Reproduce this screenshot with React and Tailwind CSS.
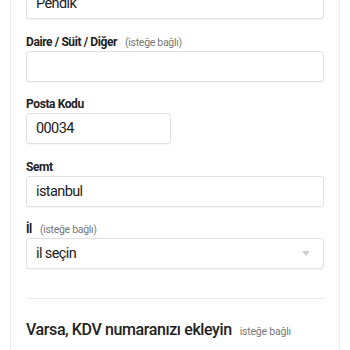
import React from 'react';

const font = { fontFamily: 'Roboto, "Noto Sans", sans-serif' };

function Label({ children, optional }) {
  return (
    <div className="flex items-baseline gap-[8px] h-4 leading-4 mb-px whitespace-nowrap">
      <span className="text-[12px] font-bold text-[#222] tracking-[-0.4px]">{children}</span>
      {optional && <span className="text-[10.5px] text-[#777] tracking-[-0.3px]">(isteğe bağlı)</span>}
    </div>
  );
}

function Field({ value, className = 'w-full' }) {
  return (
    <div className={`${className} h-[31px] border border-[#e2e2e2] rounded-[3px] bg-white flex items-center pl-[9px] text-[14.5px] tracking-[-0.6px] text-[#222] shadow-[0_1px_1px_rgba(0,0,0,0.04)]`}>
      {value}
    </div>
  );
}

export default function App() {
  return (
    <div className="w-[350px] h-[350px] overflow-hidden bg-white" style={font}>
      <div className="mx-[10px] border-x border-[#ececec] bg-white px-[15px] h-[400px]">
        <div className="-mt-[12px] flex flex-col">
          <Field value="Pendik" />

          <div className="mt-[15px]">
            <Label optional>Daire / Süit / Diğer</Label>
            <Field value="" />
          </div>

          <div className="mt-[14px]">
            <Label>Posta Kodu</Label>
            <Field value="00034" className="w-[145px]" />
          </div>

          <div className="mt-[15px]">
            <Label>Semt</Label>
            <Field value="istanbul" />
          </div>

          <div className="mt-[14px]">
            <Label optional>İl</Label>
            <div className="relative">
              <Field value="il seçin" />
              <svg className="absolute right-[14px] top-[13px]" width="8" height="5" viewBox="0 0 8 5">
                <path d="M0 0 L8 0 L4 5 Z" fill="#cfcfcf" />
              </svg>
            </div>
          </div>

          <div className="mt-[29px] mr-[-2px] border-t border-[#ebebeb]" />

          <div className="mt-[19px] flex items-baseline gap-[8px] whitespace-nowrap">
            <span className="text-[16px] font-medium text-[#222] tracking-[-0.4px]">Varsa, KDV numaranızı ekleyin</span>
            <span className="text-[10.5px] text-[#777] tracking-[-0.2px]">isteğe bağlı</span>
          </div>
          <p className="mt-[5px] text-[12.5px] text-[#777] leading-5 whitespace-nowrap">Bu, herhangi bir satıcı ücreti için sizden KDV tahsil</p>
        </div>
      </div>
    </div>
  );
}
